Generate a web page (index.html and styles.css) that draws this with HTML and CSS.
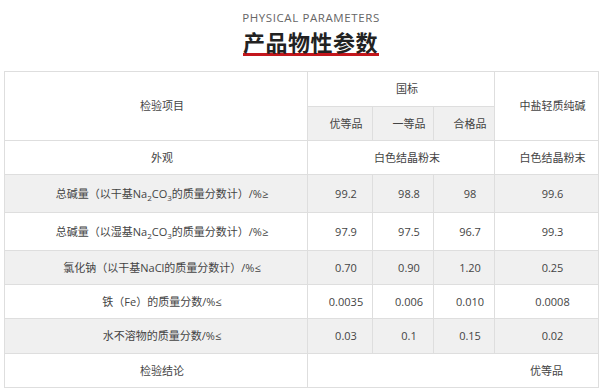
FILE: index.html
```html
<!DOCTYPE html>
<html lang="zh">
<head>
<meta charset="utf-8">
<link rel="stylesheet" href="styles.css">
</head>
<body>
<div class="page">
  <header class="heading">
    <div class="en">PHYSICAL PARAMETERS</div>
    <h1 class="cn">产品物性参数</h1>
  </header>
  <table class="params">
    <colgroup>
      <col class="c1"><col class="c2"><col class="c3"><col class="c4"><col class="c5">
    </colgroup>
    <tr class="h1">
      <td rowspan="2">检验项目</td>
      <td colspan="3">国标</td>
      <td rowspan="2">中盐轻质纯碱</td>
    </tr>
    <tr class="h2 gray">
      <td>优等品</td><td>一等品</td><td>合格品</td>
    </tr>
    <tr class="r34">
      <td>外观</td><td colspan="3">白色结晶粉末</td><td>白色结晶粉末</td>
    </tr>
    <tr class="r38 gray">
      <td>总碱量（以干基Na<sub>2</sub>CO<sub>3</sub>的质量分数计）/%≥</td><td>99.2</td><td>98.8</td><td>98</td><td>99.6</td>
    </tr>
    <tr class="r38">
      <td>总碱量（以湿基Na<sub>2</sub>CO<sub>3</sub>的质量分数计）/%≥</td><td>97.9</td><td>97.5</td><td>96.7</td><td>99.3</td>
    </tr>
    <tr class="r34 gray">
      <td>氯化钠（以干基NaCl的质量分数计）/%≤</td><td>0.70</td><td>0.90</td><td>1.20</td><td>0.25</td>
    </tr>
    <tr class="r34">
      <td>铁（Fe）的质量分数/%≤</td><td>0.0035</td><td>0.006</td><td>0.010</td><td>0.0008</td>
    </tr>
    <tr class="r35 gray">
      <td>水不溶物的质量分数/%≤</td><td>0.03</td><td>0.1</td><td>0.15</td><td>0.02</td>
    </tr>
    <tr class="r34">
      <td>检验结论</td><td colspan="4" class="verdict">优等品</td>
    </tr>
  </table>
</div>
</body>
</html>
```

FILE: styles.css
```css
html, body {
  margin: 0;
  padding: 0;
  background: #fff;
}
.page {
  padding: 0 2px 0 4px;
  font-family: "Open Sans", "Noto Sans CJK SC", sans-serif;
  color: #444;
}
.heading {
  display: flex;
  flex-direction: column;
  align-items: center;
  padding-left: 20px;
  padding-top: 10px;
}
.en {
  font-size: 11.5px;
  line-height: 16px;
  letter-spacing: 0.6px;
  color: #666;
}
.cn {
  margin: 3px 0 0;
  font-family: "Noto Sans CJK SC", sans-serif;
  font-size: 22px;
  font-weight: 700;
  line-height: 24px;
  color: #222;
  letter-spacing: 0.5px;
  border-bottom: 3px solid #c3161c;
  padding: 0 1px 0 0;
}
.params {
  margin-top: 15px;
  width: 594px;
  border-collapse: collapse;
  table-layout: fixed;
  font-size: 11px;
}
.c1 { width: 303px; }
.c2 { width: 65px; }
.c3 { width: 61px; }
.c4 { width: 61px; }
.c5 { width: 104px; }
.params td {
  border: 1px solid #dedede;
  text-align: center;
  vertical-align: middle;
  padding: 0 0 0 12px;
  line-height: 16px;
  white-space: nowrap;
}
.params sub {
  font-size: 8px;
  line-height: 0;
}
.gray td { background: #f0f0f0; }
.h1 td { height: 34px; }
.h2 td { height: 33px; }
.r34 td { height: 33px; }
.r35 td { height: 34px; }
.r38 td { height: 37px; }
.params td.verdict {
  text-align: right;
  padding-right: 35px;
}
```
